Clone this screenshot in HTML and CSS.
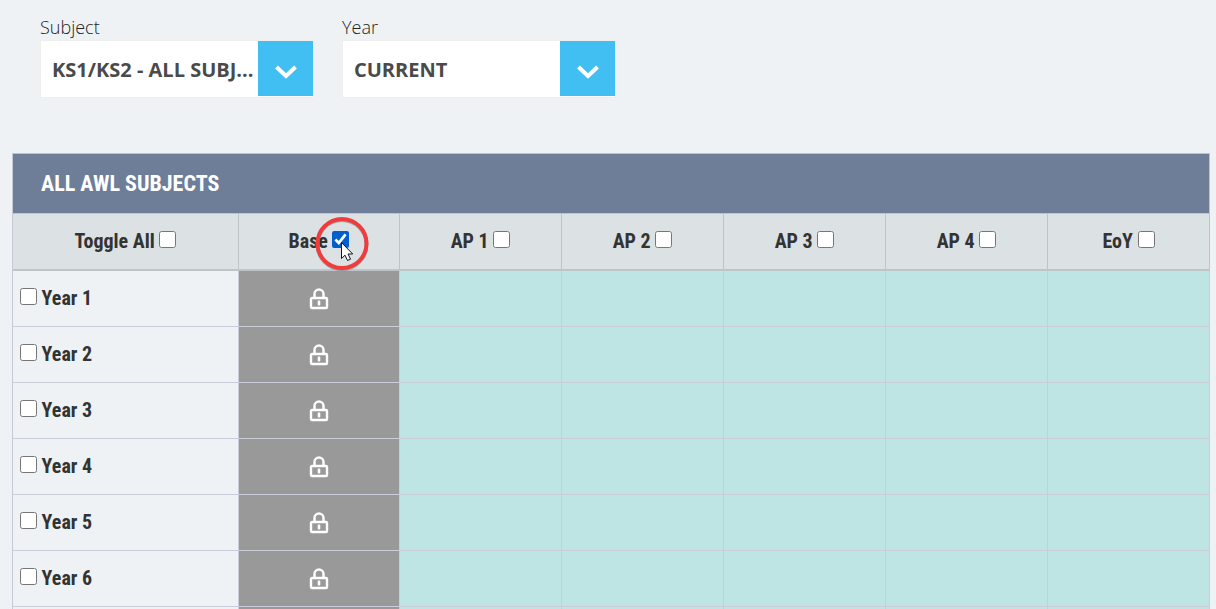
FILE: index.html
```html
<!DOCTYPE html>
<html lang="en">
<head>
    <meta charset="UTF-8">
    <meta name="viewport" content="width=device-width, initial-scale=1.0">
    <title>All AWL Subjects</title>
    <link rel="stylesheet" href="styles.css">
</head>
<body>
    <svg class="sprite" aria-hidden="true">
        <symbol id="lock" viewBox="0 0 20 22">
            <path d="M5.500 9V6a4.500 4.500 0 0 1 9 0V9" fill="none" stroke="#fff" stroke-width="2.400"/>
            <rect x="2" y="10" width="16" height="10" rx="1" fill="none" stroke="#fff" stroke-width="2.400"/>
            <rect x="8.700" y="12.500" width="2.600" height="5" rx="1" fill="#fff"/>
        </symbol>
        <symbol id="chevron" viewBox="0 0 24 16">
            <path d="M2.500 3L12 12L21.500 3" fill="none" stroke="#fff" stroke-width="4"/>
        </symbol>
    </svg>

    <form class="filters">
        <div class="filter">
            <label for="subject">Subject</label>
            <div class="select-box">
                <select id="subject">
                    <option>KS1/KS2 - ALL SUBJ...</option>
                </select>
                <span class="arrow"><svg><use href="#chevron"/></svg></span>
            </div>
        </div>
        <div class="filter">
            <label for="year">Year</label>
            <div class="select-box">
                <select id="year">
                    <option>CURRENT</option>
                </select>
                <span class="arrow"><svg><use href="#chevron"/></svg></span>
            </div>
        </div>
    </form>

    <table class="subjects">
        <colgroup>
            <col class="col-year">
            <col class="col-base">
            <col span="5">
        </colgroup>
        <thead>
            <tr>
                <th class="title" colspan="7">ALL AWL SUBJECTS</th>
            </tr>
            <tr class="toggles">
                <th><label for="all">Toggle All</label> <input type="checkbox" id="all"></th>
                <th class="base">
                    <label for="base">Base</label> <input type="checkbox" id="base" checked>
                    <svg class="pointer" viewBox="0 0 56 56" aria-hidden="true">
                        <circle cx="28" cy="28.500" r="24.500" fill="none" stroke="#777" stroke-opacity=".6" stroke-width="4"/>
                        <circle cx="28" cy="27.500" r="24.500" fill="none" stroke="#f03c3c" stroke-width="4"/>
                        <path d="M27.500 26.500V42.500L31 39.200L33.500 44.500L36.500 43.200L34 38H38.700Z" fill="#fff" stroke="#112" stroke-width="1"/>
                    </svg>
                </th>
                <th><label for="ap1">AP 1</label> <input type="checkbox" id="ap1"></th>
                <th><label for="ap2">AP 2</label> <input type="checkbox" id="ap2"></th>
                <th><label for="ap3">AP 3</label> <input type="checkbox" id="ap3"></th>
                <th><label for="ap4">AP 4</label> <input type="checkbox" id="ap4"></th>
                <th><label for="eoy">EoY</label> <input type="checkbox" id="eoy"></th>
            </tr>
        </thead>
        <tbody>
            <tr>
                <th><input type="checkbox" id="y1"> <label for="y1">Year 1</label></th>
                <td class="locked"><svg><use href="#lock"/></svg></td>
                <td></td><td></td><td></td><td></td><td></td>
            </tr>
            <tr>
                <th><input type="checkbox" id="y2"> <label for="y2">Year 2</label></th>
                <td class="locked"><svg><use href="#lock"/></svg></td>
                <td></td><td></td><td></td><td></td><td></td>
            </tr>
            <tr>
                <th><input type="checkbox" id="y3"> <label for="y3">Year 3</label></th>
                <td class="locked"><svg><use href="#lock"/></svg></td>
                <td></td><td></td><td></td><td></td><td></td>
            </tr>
            <tr>
                <th><input type="checkbox" id="y4"> <label for="y4">Year 4</label></th>
                <td class="locked"><svg><use href="#lock"/></svg></td>
                <td></td><td></td><td></td><td></td><td></td>
            </tr>
            <tr>
                <th><input type="checkbox" id="y5"> <label for="y5">Year 5</label></th>
                <td class="locked"><svg><use href="#lock"/></svg></td>
                <td></td><td></td><td></td><td></td><td></td>
            </tr>
            <tr>
                <th><input type="checkbox" id="y6"> <label for="y6">Year 6</label></th>
                <td class="locked"><svg><use href="#lock"/></svg></td>
                <td></td><td></td><td></td><td></td><td></td>
            </tr>
            <tr>
                <th></th>
                <td class="locked"></td>
                <td></td><td></td><td></td><td></td><td></td>
            </tr>
        </tbody>
    </table>
</body>
</html>
```
FILE: styles.css
```css
* {
    box-sizing: border-box;
}
html {
    height: 100%;
    overflow: hidden;
}
body {
    margin: 0;
    padding: 15px 6px 0 12px;
    background-color: #eef2f5;
    color: #333;
    font-family: "Open Sans", sans-serif;
}
.sprite {
    display: none;
}
.filters {
    display: flex;
    gap: 28px;
    padding-left: 28px;
    margin-bottom: 55px;
}
.filter {
    width: 274px;
}
.filter label {
    display: block;
    margin-bottom: 1px;
    color: #222;
    font-size: 18px;
    font-weight: 300;
    line-height: 24px;
}
.select-box {
    position: relative;
    height: 58px;
    background-color: #fff;
    border: 1px solid #eee;
}
.select-box select {
    appearance: none;
    width: 100%;
    height: 100%;
    padding: 0 56px 0 11px;
    border: 0;
    background: none;
    color: #4a4a4a;
    font-family: inherit;
    font-size: 20px;
    font-weight: 700;
}
.arrow {
    position: absolute;
    top: 0;
    right: 0;
    width: 55px;
    height: 55px;
    padding-top: 7px;
    display: flex;
    align-items: center;
    justify-content: center;
    background-color: #42bff2;
    pointer-events: none;
}
.arrow svg {
    width: 24px;
    height: 16px;
}
.subjects {
    width: 100%;
    table-layout: fixed;
    border-collapse: separate;
    border-spacing: 0;
    border-top: 1px solid #bdc5ca;
    border-left: 1px solid #c6cad6;
    font-family: "Roboto Condensed", "Liberation Sans Narrow", sans-serif;
    font-size: 20px;
    font-weight: 700;
}
.col-year {
    width: 226px;
}
.col-base {
    width: 161px;
}
.subjects th,
.subjects td {
    height: 56px;
    padding: 0;
    border-right: 1px solid #c9ccda;
    border-bottom: 1px solid #c9ccda;
}
.subjects th {
    padding-bottom: 2px;
}
.subjects .title {
    height: 60px;
    padding: 0 0 0 28px;
    background-color: #6e7d98;
    border-color: #bdc5ca;
    color: #fff;
    font-size: 22px;
    text-align: left;
}
.subjects .toggles th {
    height: 57px;
    background-color: #dce1e3;
    border-color: #bdc5ca;
    border-bottom-width: 2px;
}
.subjects tbody th {
    padding-left: 7px;
    text-align: left;
}
.subjects td {
    background-color: #bfe4e4;
    text-align: center;
}
.subjects .locked {
    background-color: #999;
}
.locked svg {
    display: block;
    width: 20px;
    height: 22px;
    margin: 0 auto;
}
input[type="checkbox"] {
    width: 17px;
    height: 17px;
    margin: 0;
    accent-color: #005fcc;
}
.base {
    position: relative;
}
.pointer {
    position: absolute;
    top: 2px;
    left: 75px;
    width: 56px;
    height: 56px;
    pointer-events: none;
}
```
